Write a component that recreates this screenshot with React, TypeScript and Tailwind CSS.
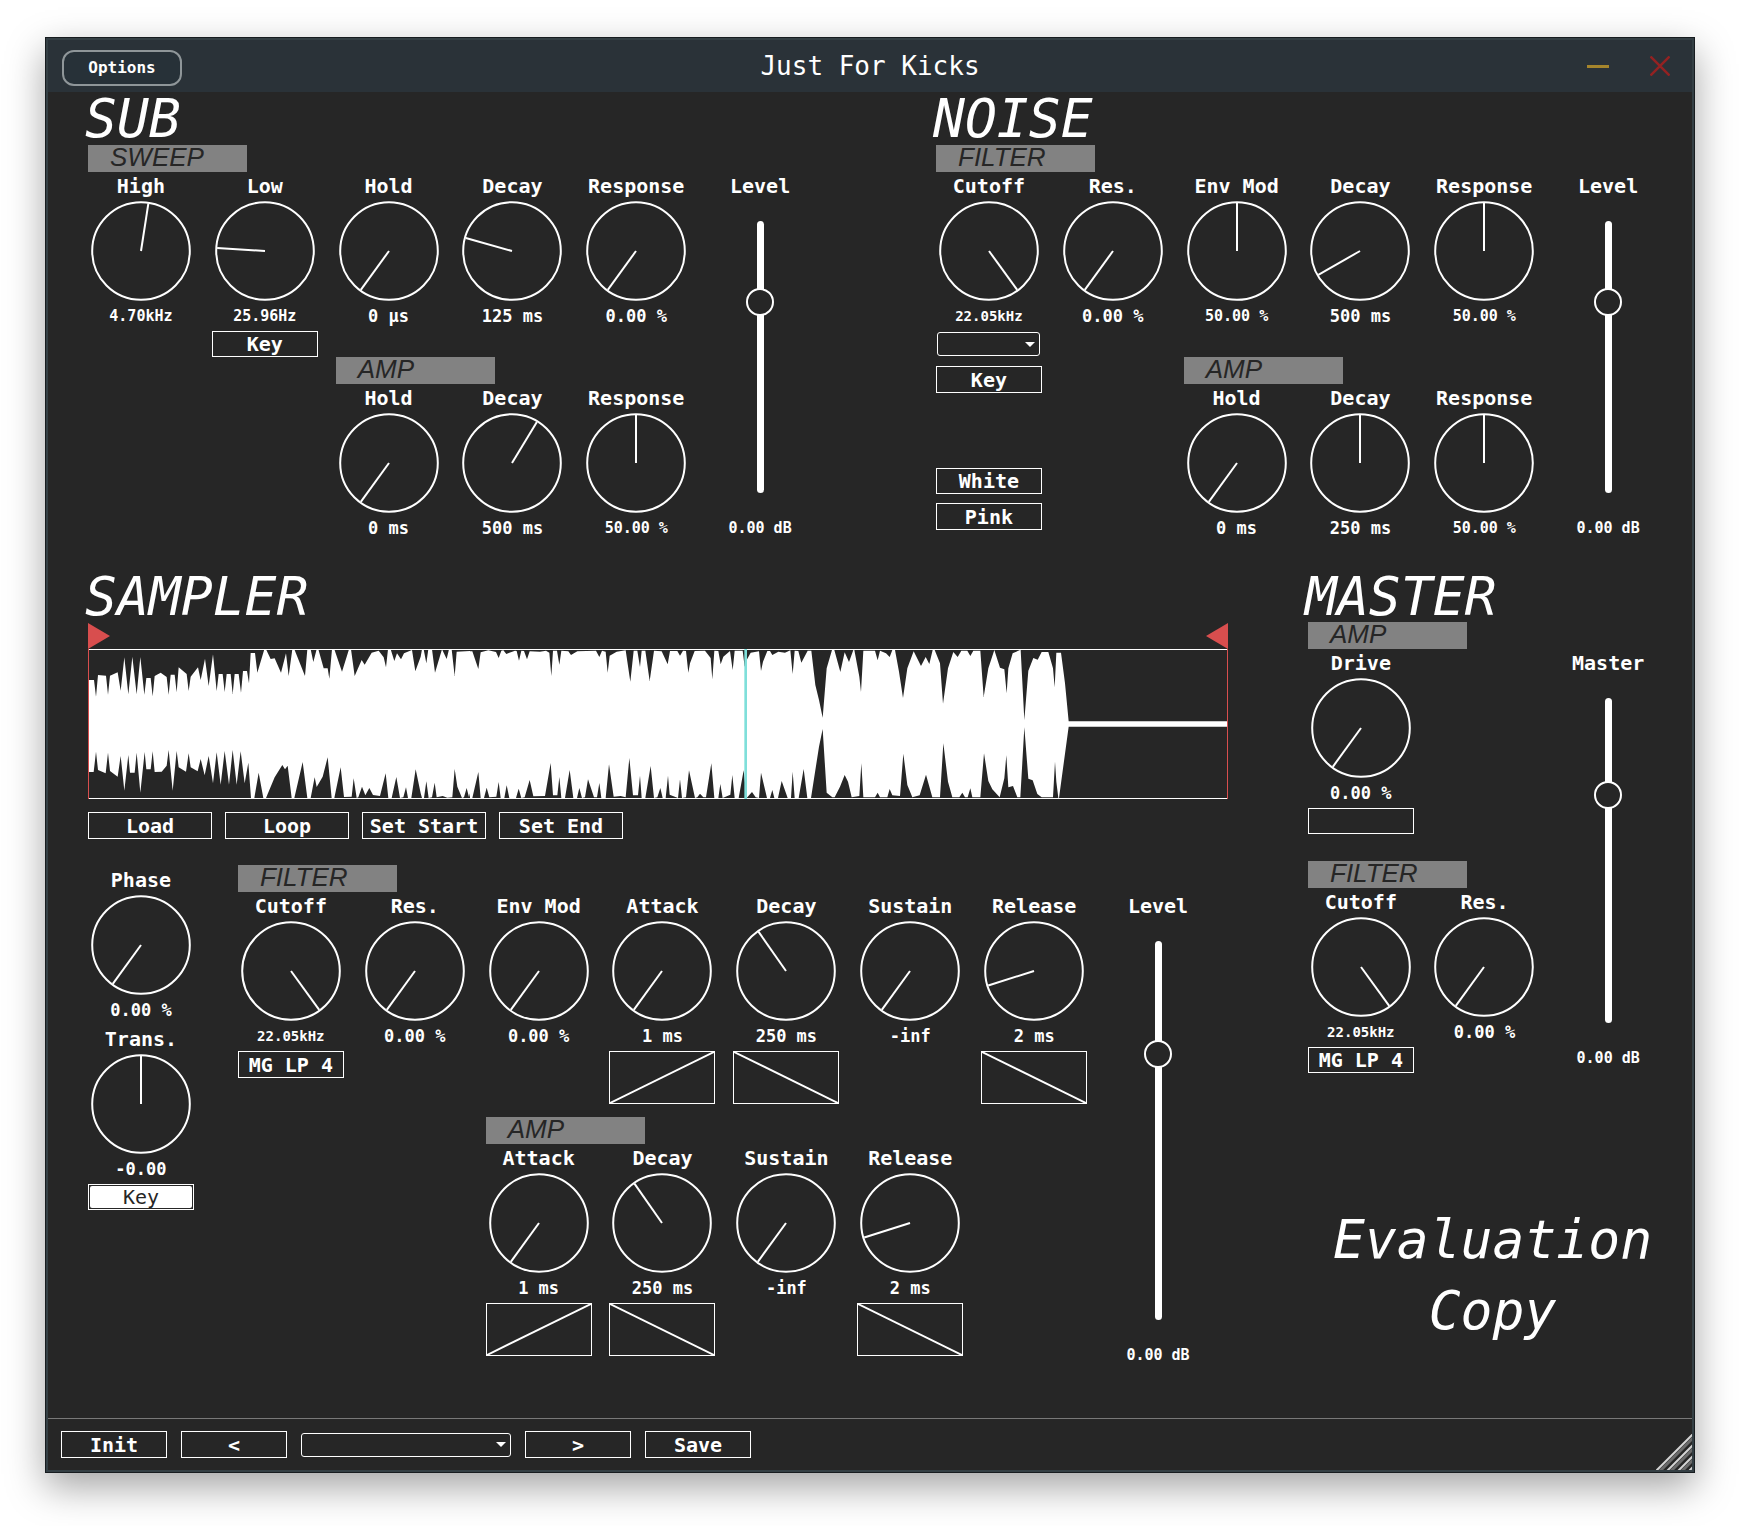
import React, { useId, useState } from "react";

type Point = [number, number];

type WaveSegment = { dx: number; dy: number; top: Point[]; bottom: Point[] };

/* Sample outline, drawn on a 3420 x 450 canvas; each segment carries its own origin. */
const WAVE: WaveSegment[] = [
  {
    dx: -54,
    dy: -267,
    top: [
      [54, 360], [72, 360], [78, 410], [84, 345], [108, 347], [114, 404], [120, 347], [143, 337], [152, 392], [163, 292],
      [175, 403], [187, 290], [200, 403], [211, 291], [223, 404], [229, 354], [242, 354], [248, 409], [254, 348], [272, 338],
      [290, 351], [296, 404], [302, 344], [314, 344], [320, 397], [326, 322], [350, 342], [356, 393], [362, 350], [384, 322],
      [392, 360], [405, 296], [416, 378], [429, 283], [440, 393], [446, 342], [458, 342], [464, 396], [470, 342], [482, 342],
      [488, 402], [494, 342], [506, 342], [513, 398], [519, 333], [531, 333], [537, 370], [542, 279], [555, 279], [562, 338],
      [583, 268], [588, 268], [602, 297], [614, 295], [633, 338], [648, 280], [656, 348], [667, 268], [673, 268], [705, 348],
      [712, 268], [722, 268], [730, 306], [740, 268], [745, 268], [761, 325], [773, 325], [778, 356], [786, 268], [793, 268],
      [816, 335], [837, 268], [843, 268], [854, 348], [875, 300], [884, 314], [905, 278], [926, 272], [941, 292], [948, 322],
      [954, 268], [962, 268], [973, 303], [981, 280], [993, 298], [1002, 280], [1026, 270], [1036, 334], [1052, 290], [1056, 268],
      [1061, 268], [1069, 310], [1075, 268], [1086, 268], [1095, 338], [1116, 268], [1130, 297], [1137, 268], [1145, 268],
      [1154, 348], [1160, 275], [1200, 273],
    ],
    bottom: [
      [54, 636], [71, 636], [78, 575], [84, 630], [107, 640], [114, 578], [120, 633], [143, 650], [152, 588], [163, 692],
      [175, 585], [180, 638], [194, 638], [200, 578], [211, 698], [224, 576], [229, 628], [242, 628], [248, 574], [254, 636],
      [275, 635], [290, 617], [296, 570], [308, 692], [320, 573], [326, 622], [348, 635], [356, 580], [362, 622], [383, 634],
      [392, 597], [404, 646], [416, 588], [429, 670], [440, 577], [452, 674], [464, 573], [477, 674], [488, 570], [500, 674],
      [512, 574], [524, 670], [535, 608], [543, 714], [553, 714], [566, 638], [580, 714], [588, 714], [614, 652], [637, 615],
      [645, 628], [653, 617], [665, 714], [673, 714], [698, 606], [712, 714], [722, 714], [734, 652], [740, 681], [758, 650],
      [773, 592], [785, 714], [793, 714], [812, 622], [822, 711], [845, 710], [851, 655], [860, 714], [865, 712], [876, 680],
      [886, 706], [898, 684], [909, 705], [930, 708], [947, 640], [955, 714], [965, 714], [979, 651], [990, 714], [1000, 712],
      [1008, 682], [1014, 714], [1024, 714], [1037, 628], [1052, 700], [1056, 714], [1062, 714], [1069, 664], [1076, 714],
      [1086, 712], [1094, 668], [1100, 712], [1118, 708], [1132, 713], [1147, 712], [1154, 627], [1162, 680], [1176, 714],
      [1182, 712], [1190, 684], [1197, 712], [1200, 700],
    ],
  },
  {
    dx: 1116,
    dy: -147,
    top: [
      [30, 154], [37, 154], [55, 207], [62, 157], [85, 151], [108, 156], [116, 174], [124, 152], [130, 151], [139, 162],
      [165, 152], [170, 153], [177, 182], [184, 152], [192, 153], [201, 178], [209, 154], [240, 155], [258, 152], [268, 158],
      [274, 228], [279, 152], [291, 152], [298, 194], [304, 152], [325, 154], [333, 165], [352, 154], [408, 152], [418, 171],
      [426, 152], [437, 155], [443, 218], [449, 167], [470, 155], [497, 151], [511, 245], [521, 152], [532, 152], [540, 201],
      [545, 152], [556, 152], [569, 243], [582, 152], [605, 154], [623, 193], [630, 153], [652, 153], [660, 167], [669, 152],
      [678, 153], [685, 218], [690, 190], [704, 153], [735, 152], [752, 174], [757, 238], [763, 152], [775, 153], [782, 193],
      [790, 170], [810, 153], [818, 210], [824, 152], [848, 152], [854, 200], [860, 180], [872, 158], [897, 154], [903, 213],
      [909, 185], [922, 153], [930, 153], [937, 165], [955, 155], [975, 158], [991, 151], [998, 222], [1004, 152], [1015, 153],
      [1024, 188], [1043, 152], [1054, 152], [1066, 255], [1077, 300], [1088, 353],
    ],
    bottom: [
      [30, 594], [37, 594], [55, 516], [62, 594], [72, 594], [80, 563], [88, 592], [109, 590], [116, 546], [122, 594],
      [133, 594], [140, 556], [148, 594], [168, 594], [176, 566], [184, 594], [194, 592], [209, 540], [220, 589], [255, 588],
      [272, 489], [279, 586], [292, 586], [298, 531], [304, 594], [315, 594], [329, 510], [340, 594], [351, 594], [358, 564],
      [366, 594], [375, 592], [384, 538], [402, 592], [411, 592], [418, 549], [424, 594], [437, 594], [447, 493], [461, 590],
      [482, 588], [497, 592], [508, 474], [519, 586], [534, 586], [540, 527], [545, 594], [556, 594], [572, 498], [582, 594],
      [592, 592], [601, 564], [608, 594], [617, 594], [624, 527], [629, 584], [654, 594], [660, 538], [666, 594], [678, 592],
      [687, 511], [705, 594], [712, 592], [720, 581], [730, 592], [738, 592], [754, 490], [763, 594], [775, 594], [781, 552],
      [788, 594], [811, 584], [817, 525], [824, 594], [836, 594], [851, 511], [860, 594], [876, 576], [887, 592], [897, 594],
      [903, 518], [921, 594], [930, 594], [937, 570], [943, 594], [954, 594], [965, 543], [983, 594], [993, 594], [998, 515],
      [1004, 594], [1016, 594], [1031, 507], [1042, 594], [1053, 594], [1077, 440], [1088, 387],
    ],
  },
  {
    dx: 2136,
    dy: -147,
    top: [
      [68, 353], [80, 205], [96, 150], [103, 150], [121, 216], [134, 157], [147, 186], [160, 150], [163, 150], [178, 230],
      [183, 276], [190, 152], [225, 152], [233, 181], [240, 152], [258, 160], [269, 171], [277, 150], [285, 150], [297, 215],
      [309, 294], [322, 205], [341, 154], [363, 198], [377, 171], [388, 192], [398, 150], [404, 150], [420, 190], [429, 311],
      [444, 205], [460, 156], [473, 171], [484, 152], [502, 152], [511, 168], [520, 152], [541, 152], [551, 291], [565, 205],
      [583, 150], [600, 203], [613, 208], [620, 280], [625, 205], [638, 160], [660, 150], [662, 150], [673, 360], [685, 212],
      [700, 174], [713, 179], [725, 156], [745, 156], [759, 205], [764, 262], [769, 158], [783, 158], [795, 250], [806, 364],
      [1281, 364],
    ],
    bottom: [
      [68, 387], [80, 578], [97, 592], [104, 592], [120, 560], [134, 525], [144, 545], [155, 592], [178, 588], [184, 490],
      [190, 592], [225, 592], [233, 578], [240, 592], [262, 592], [269, 567], [277, 586], [300, 588], [310, 461], [322, 555],
      [337, 592], [359, 586], [378, 524], [397, 592], [420, 592], [430, 430], [444, 545], [457, 592], [478, 592], [487, 578],
      [495, 592], [503, 592], [511, 565], [517, 592], [541, 592], [552, 460], [565, 543], [577, 568], [599, 592], [613, 535],
      [619, 466], [625, 562], [639, 558], [652, 592], [661, 592], [673, 382], [685, 536], [698, 541], [712, 582], [725, 592],
      [759, 592], [765, 485], [769, 545], [775, 594], [777, 594], [806, 380], [1281, 380],
    ],
  },
];

const outline = (side: "top" | "bottom") =>
  WAVE.flatMap((s) => s[side].map(([x, y]): Point => [x + s.dx, y + s.dy]));

const WAVE_POINTS = [...outline("top"), ...outline("bottom").reverse()].map((p) => p.join(",")).join(" ");

function valueSize(text: string) {
  if (text.length >= 8) return "text-[14px]";
  if (text.length === 7) return "text-[15px]";
  return "text-[17px]";
}

function Value({ text, htmlFor }: { text: string; htmlFor: string }) {
  return (
    <output htmlFor={htmlFor} className={`h-[30px] leading-[30px] font-bold whitespace-pre ${valueSize(text)}`}>
      {text}
    </output>
  );
}

function Knob({ label, value, angle, className = "" }: { label: string; value: string; angle: number; className?: string }) {
  const id = useId();
  const rad = (angle * Math.PI) / 180;
  return (
    <div className={`flex flex-col items-center ${className}`}>
      <label htmlFor={id} className="h-[29px] text-[20px] leading-[29px] font-bold whitespace-pre">
        {label}
      </label>
      <div className="grid size-[100px]">
        <svg viewBox="0 0 100 100" className="size-[100px] [grid-area:1/1]" fill="none" stroke="white" strokeWidth="2" aria-hidden="true">
          <circle cx="50" cy="50" r="48.8" />
          <line x1="50" y1="50" x2={50 + 48 * Math.sin(rad)} y2={50 - 48 * Math.cos(rad)} />
        </svg>
        <input id={id} type="range" min={-144} max={144} step="any" defaultValue={angle} className="m-0 size-[100px] cursor-pointer opacity-0 [grid-area:1/1]" />
      </div>
      <Value text={value} htmlFor={id} />
    </div>
  );
}

function Fader({ label, position, className = "" }: { label: string; position: number; className?: string }) {
  const id = useId();
  return (
    <div className={`flex flex-col items-center ${className}`}>
      <label htmlFor={id} className="h-[29px] text-[20px] leading-[29px] font-bold">
        {label}
      </label>
      <div className="my-5 grid min-h-0 flex-1 justify-items-center">
        <div className="h-full w-[7px] rounded-full bg-white [grid-area:1/1]" />
        <input
          id={id}
          type="range"
          min={0}
          max={1}
          step="any"
          defaultValue={position}
          className="m-0 h-full w-7 appearance-none bg-transparent [direction:rtl] [grid-area:1/1] [writing-mode:vertical-lr] [&::-webkit-slider-runnable-track]:bg-transparent [&::-webkit-slider-thumb]:size-7 [&::-webkit-slider-thumb]:appearance-none [&::-webkit-slider-thumb]:rounded-full [&::-webkit-slider-thumb]:border-2 [&::-webkit-slider-thumb]:border-white [&::-webkit-slider-thumb]:bg-[#262626]"
        />
      </div>
      <Value text="0.00 dB" htmlFor={id} />
    </div>
  );
}

function Tag({ text, className = "" }: { text: string; className?: string }) {
  return (
    <h3 className={`ml-[9px] h-[27px] w-[159px] bg-[#828282] pl-[22px] font-['Liberation_Sans',Arial,sans-serif] text-[26px] leading-6 text-[#262626] italic ${className}`}>
      {text}
    </h3>
  );
}

function Title({ text }: { text: string }) {
  return <h2 className="h-[53px] pl-[6px] text-[53px] leading-[54px] italic">{text}</h2>;
}

function Btn({ text, className = "", label, tall = false }: { text: string; className?: string; label?: string; tall?: boolean }) {
  return (
    <button
      type="button"
      aria-label={label}
      className={`flex items-center justify-center border border-white text-[20px] leading-6 font-bold whitespace-pre ${tall ? "h-[27px]" : "h-[26px]"} ${className}`}
    >
      {text}
    </button>
  );
}

function Picker({ label, className = "" }: { label: string; className?: string }) {
  return (
    <div className={`grid h-6 items-center ${className}`}>
      <select aria-label={label} className="h-6 w-full appearance-none rounded-[3px] border border-white bg-transparent px-2 text-[16px] [grid-area:1/1]">
        <option value=""></option>
      </select>
      <svg viewBox="0 0 10 5" className="pointer-events-none mr-[5px] h-[5px] w-[10px] justify-self-end [grid-area:1/1]" fill="white" aria-hidden="true">
        <path d="M0 0H10L5 5Z" />
      </svg>
    </div>
  );
}

function Curve({ rising = false, label, className = "" }: { rising?: boolean; label: string; className?: string }) {
  return (
    <button type="button" aria-label={label} className={`mx-auto h-[53px] w-[106px] border border-white ${className}`}>
      <svg viewBox="0 0 104 51" className="h-full w-full" stroke="white" strokeWidth="2" aria-hidden="true">
        {rising ? <path d="M0 51L104 0" /> : <path d="M0 0L104 51" />}
      </svg>
    </button>
  );
}

function SubSection() {
  return (
    <section>
      <Title text="SUB" />
      <div className="grid grid-cols-6 grid-rows-[27px_159px_26px_27px_159px]">
        <Tag text="SWEEP" className="col-span-5" />
        <Knob label="High" value="4.70kHz" angle={8.8} className="col-start-1 row-start-2" />
        <Knob label="Low" value="25.96Hz" angle={-86.4} className="col-start-2 row-start-2" />
        <Knob label="Hold" value="0 µs" angle={-144} className="col-start-3 row-start-2" />
        <Knob label="Decay" value="125 ms" angle={-74.2} className="col-start-4 row-start-2" />
        <Knob label="Response" value="0.00 %" angle={-144} className="col-start-5 row-start-2" />
        <Btn text="Key" className="col-start-2 row-start-3 mx-auto w-[106px]" />
        <Tag text="AMP" className="col-span-2 col-start-3 row-start-4" />
        <Knob label="Hold" value="0 ms" angle={-144} className="col-start-3 row-start-5" />
        <Knob label="Decay" value="500 ms" angle={31.2} className="col-start-4 row-start-5" />
        <Knob label="Response" value="50.00 %" angle={0} className="col-start-5 row-start-5" />
        <Fader label="Level" position={0.725} className="col-start-6 row-span-4 row-start-2" />
      </div>
    </section>
  );
}

function NoiseSection() {
  return (
    <section>
      <Title text="NOISE" />
      <div className="grid grid-cols-6 grid-rows-[27px_159px_26px_27px_159px]">
        <Tag text="FILTER" className="col-span-5" />
        <Knob label="Cutoff" value="22.05kHz" angle={144} className="col-start-1 row-start-2" />
        <Knob label="Res." value="0.00 %" angle={-144} className="col-start-2 row-start-2" />
        <Knob label="Env Mod" value="50.00 %" angle={0} className="col-start-3 row-start-2" />
        <Knob label="Decay" value="500 ms" angle={-119.7} className="col-start-4 row-start-2" />
        <Knob label="Response" value="50.00 %" angle={0} className="col-start-5 row-start-2" />
        <div className="col-start-1 row-span-3 row-start-3 flex flex-col items-center pt-px pb-[13px]">
          <Picker label="Filter type" className="w-[103px]" />
          <Btn tall text="Key" className="mt-[10px] w-[106px]" />
          <Btn text="White" className="mt-auto w-[106px]" />
          <Btn tall text="Pink" className="mt-[9px] w-[106px]" />
        </div>
        <Tag text="AMP" className="col-span-2 col-start-3 row-start-4" />
        <Knob label="Hold" value="0 ms" angle={-144} className="col-start-3 row-start-5" />
        <Knob label="Decay" value="250 ms" angle={0} className="col-start-4 row-start-5" />
        <Knob label="Response" value="50.00 %" angle={0} className="col-start-5 row-start-5" />
        <Fader label="Level" position={0.725} className="col-start-6 row-span-4 row-start-2" />
      </div>
    </section>
  );
}

function Waveform() {
  return (
    <div className="-mt-px -mr-2 ml-[9px]">
      <div className="flex justify-between">
        <svg viewBox="0 0 22 26" className="mt-px h-[26px] w-[22px]" fill="#d84e4e" aria-hidden="true">
          <path d="M0 0L22 13L0 26Z" />
        </svg>
        <svg viewBox="0 0 22 26" className="mt-px h-[26px] w-[22px]" fill="#d84e4e" aria-hidden="true">
          <path d="M22 0L0 13L22 26Z" />
        </svg>
      </div>
      <svg viewBox="0 0 3420 450" preserveAspectRatio="none" className="block h-[150px] w-full" role="img" aria-label="Sample waveform">
        <polygon points={WAVE_POINTS} fill="white" />
        <path d="M0 0H3420V3H0ZM0 447H3420V450H0Z" fill="white" />
        <path d="M0 0H3V450H0ZM3417 0H3420V450H3417Z" fill="#d84e4e" />
        <path d="M1969 0H1977V450H1969Z" fill="#7fdfda" />
      </svg>
    </div>
  );
}

function SamplerSection() {
  const [keyOn, setKeyOn] = useState(true);
  return (
    <section>
      <Title text="SAMPLER" />
      <Waveform />
      <div className="mt-[13px] ml-[9px] flex gap-[13px]">
        <Btn tall text="Load" className="w-[124px]" />
        <Btn tall text="Loop" className="w-[124px]" />
        <Btn tall text="Set Start" className="w-[124px]" />
        <Btn tall text="Set End" className="w-[124px]" />
      </div>
      <div className="mt-[26px] grid grid-cols-[1fr_8fr] gap-x-[26px]">
        <div className="pt-px">
          <Knob label="Phase" value="0.00 %" angle={-144} />
          <Knob label="Trans." value="-0.00" angle={0} />
          <button
            type="button"
            aria-pressed={keyOn}
            onClick={() => setKeyOn(!keyOn)}
            className={`mx-auto flex h-[26px] w-[106px] border border-white p-px text-[20px] ${keyOn ? "text-[#262626]" : "text-white"}`}
          >
            <span className={`flex-1 rounded-[2px] leading-[22px] ${keyOn ? "bg-white" : "bg-transparent"}`}>Key</span>
          </button>
        </div>
        <div className="grid grid-cols-8 grid-rows-[27px_159px_53px_13px_27px_159px_67px] items-start">
          <Tag text="FILTER" className="col-span-7" />
          <Knob label="Cutoff" value="22.05kHz" angle={144} className="col-start-1 row-start-2" />
          <Knob label="Res." value="0.00 %" angle={-144} className="col-start-2 row-start-2" />
          <Knob label="Env Mod" value="0.00 %" angle={-144} className="col-start-3 row-start-2" />
          <Knob label="Attack" value="1 ms" angle={-144} className="col-start-4 row-start-2" />
          <Knob label="Decay" value="250 ms" angle={-35} className="col-start-5 row-start-2" />
          <Knob label="Sustain" value="-inf" angle={-144} className="col-start-6 row-start-2" />
          <Knob label="Release" value="2 ms" angle={-107.6} className="col-start-7 row-start-2" />
          <Btn tall text="MG LP 4" className="col-start-1 row-start-3 mx-auto w-[106px]" />
          <Curve rising label="Filter attack curve" className="col-start-4 row-start-3" />
          <Curve label="Filter decay curve" className="col-start-5 row-start-3" />
          <Curve label="Filter release curve" className="col-start-7 row-start-3" />
          <Tag text="AMP" className="col-span-2 col-start-3 row-start-5" />
          <Knob label="Attack" value="1 ms" angle={-144} className="col-start-3 row-start-6" />
          <Knob label="Decay" value="250 ms" angle={-35} className="col-start-4 row-start-6" />
          <Knob label="Sustain" value="-inf" angle={-144} className="col-start-5 row-start-6" />
          <Knob label="Release" value="2 ms" angle={-107.6} className="col-start-6 row-start-6" />
          <Curve rising label="Amp attack curve" className="col-start-3 row-start-7" />
          <Curve label="Amp decay curve" className="col-start-4 row-start-7" />
          <Curve label="Amp release curve" className="col-start-6 row-start-7" />
          <Fader label="Level" position={0.719} className="col-start-8 row-span-6 row-start-2 self-stretch" />
        </div>
      </div>
    </section>
  );
}

function MasterSection() {
  return (
    <section>
      <Title text="MASTER" />
      <div className="-mt-px grid grid-cols-3 grid-rows-[27px_159px_26px_27px_27px_159px_26px]">
        <Tag text="AMP" className="col-span-2" />
        <Knob label="Drive" value="0.00 %" angle={-144} className="col-start-1 row-start-2" />
        <Btn text="" label="Drive type" className="col-start-1 row-start-3 mx-auto w-[106px]" />
        <Tag text="FILTER" className="col-span-2 col-start-1 row-start-5" />
        <Knob label="Cutoff" value="22.05kHz" angle={144} className="col-start-1 row-start-6" />
        <Knob label="Res." value="0.00 %" angle={-144} className="col-start-2 row-start-6" />
        <Btn text="MG LP 4" className="col-start-1 row-start-7 mx-auto w-[106px]" />
        <Fader label="Master" position={0.721} className="col-start-3 row-span-6 row-start-2" />
      </div>
      <p className="mt-[131px] pl-4 text-center text-[53px] leading-[71px] italic">
        Evaluation
        <br />
        Copy
      </p>
    </section>
  );
}

export default function App() {
  return (
    <div className="min-h-screen bg-white px-[45px] pt-[37px] pb-[53px] font-['DejaVu_Sans_Mono',monospace] text-white">
      <div className="border border-[#171c1f] shadow-[0_14px_36px_rgba(0,0,0,0.36)]">
        <div className="border-2 border-[#343f44] bg-[#262626]">
          <header className="grid h-[52px] grid-cols-[1fr_auto_1fr] items-center bg-[#2a3238]">
            <button type="button" className="mt-1 ml-[14px] h-9 w-[120px] rounded-xl border-2 border-[#8f9699] bg-[#273138] text-[16px] font-bold">
              Options
            </button>
            <h1 className="text-[26px] leading-8 whitespace-pre">Just For Kicks</h1>
            <div className="mr-px flex justify-end">
              <button type="button" aria-label="Minimise" className="flex h-[52px] w-[62px] items-center justify-center">
                <svg viewBox="0 0 22 3" className="h-[3px] w-[22px]" aria-hidden="true">
                  <path d="M0 0H22V3H0Z" fill="#a5852c" />
                </svg>
              </button>
              <button type="button" aria-label="Close" className="flex h-[52px] w-[62px] items-center justify-center">
                <svg viewBox="0 0 20 20" className="size-5" stroke="#932222" strokeWidth="2.5" aria-hidden="true">
                  <path d="M0.5 0.5L19.5 19.5M19.5 0.5L0.5 19.5" />
                </svg>
              </button>
            </div>
          </header>
          <main className="pr-[22px] pb-12 pl-[31px]">
            <div className="grid grid-cols-2 gap-x-[105px]">
              <SubSection />
              <NoiseSection />
            </div>
            <div className="mt-[27px] grid grid-cols-[1141fr_371fr] gap-x-[79px]">
              <SamplerSection />
              <MasterSection />
            </div>
          </main>
          <footer className="flex h-[52px] items-center gap-[14px] border-t border-[#787878] pl-[13px]">
            <Btn tall text="Init" className="w-[106px]" />
            <Btn tall text="<" label="Previous preset" className="w-[106px]" />
            <Picker label="Preset" className="w-[210px]" />
            <Btn tall text=">" label="Next preset" className="w-[106px]" />
            <Btn tall text="Save" className="w-[106px]" />
            <svg viewBox="0 0 36 36" className="ml-auto size-9 self-end" fill="none" strokeWidth="2" aria-hidden="true">
              <path d="M0 37L37 0M11 37L37 11M22 37L37 22M33 37L37 33" stroke="#d4d4d4" />
              <path d="M4 37L37 4M15 37L37 15M26 37L37 26" stroke="#6a6a6a" strokeWidth="3" />
            </svg>
          </footer>
        </div>
      </div>
    </div>
  );
}
